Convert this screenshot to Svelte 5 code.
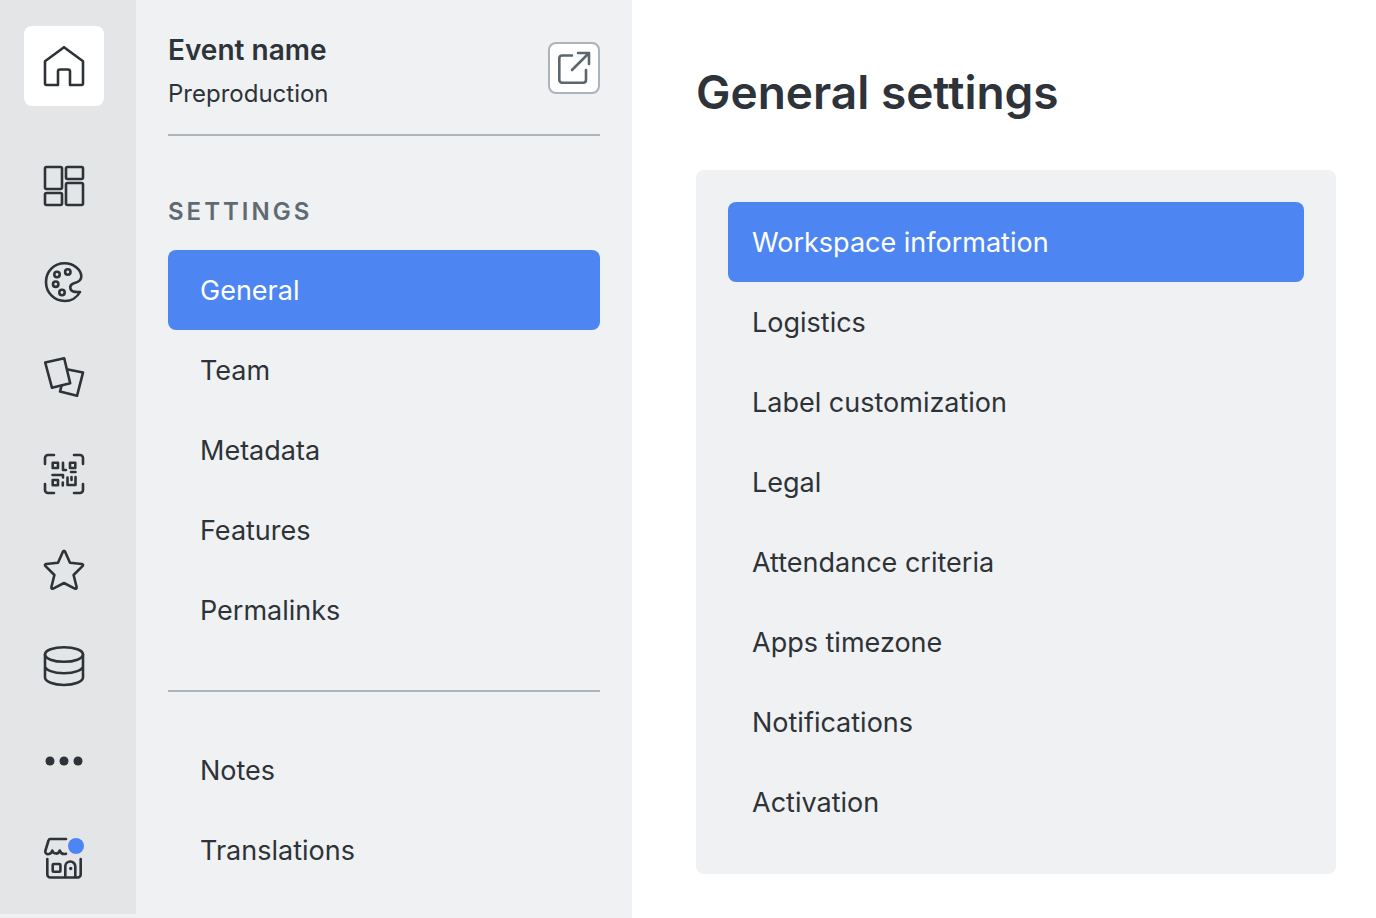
<script lang="ts">
  type MenuItem = { id: string; label: string };

  const railItems: MenuItem[] = [
    { id: "home", label: "Home" },
    { id: "layout", label: "Layout" },
    { id: "branding", label: "Branding" },
    { id: "cards", label: "Cards" },
    { id: "scan", label: "Scan" },
    { id: "favorites", label: "Favorites" },
    { id: "data", label: "Data" },
    { id: "more", label: "More" },
    { id: "store", label: "Store" },
  ];

  const settings: MenuItem[] = [
    { id: "general", label: "General" },
    { id: "team", label: "Team" },
    { id: "metadata", label: "Metadata" },
    { id: "features", label: "Features" },
    { id: "permalinks", label: "Permalinks" },
  ];

  const extras: MenuItem[] = [
    { id: "notes", label: "Notes" },
    { id: "translations", label: "Translations" },
  ];

  const sections: MenuItem[] = [
    { id: "workspace", label: "Workspace information" },
    { id: "logistics", label: "Logistics" },
    { id: "labels", label: "Label customization" },
    { id: "legal", label: "Legal" },
    { id: "attendance", label: "Attendance criteria" },
    { id: "timezone", label: "Apps timezone" },
    { id: "notifications", label: "Notifications" },
    { id: "activation", label: "Activation" },
  ];

  let rail = $state("home");
  let page = $state("general");
  let section = $state("workspace");
</script>

{#snippet icon(id: string)}
  <svg class="icon" viewBox="0 0 60 60" aria-hidden="true">
    {#if id === "home"}
      <path d="M11 25.2 30 11.2l19 14v22.3a1.5 1.5 0 0 1-1.5 1.5H36V35.5a2 2 0 0 0-2-2h-8a2 2 0 0 0-2 2V49H12.5a1.5 1.5 0 0 1-1.5-1.500z" />
    {:else if id === "layout"}
      <rect x="11" y="11" width="17" height="22" rx="1.5" />
      <rect x="32" y="11" width="17" height="12" rx="1.5" />
      <rect x="11" y="37" width="17" height="12" rx="1.5" />
      <rect x="32" y="27" width="17" height="22" rx="1.5" />
    {:else if id === "branding"}
      <path d="M46 40C43 45.5 37 49 31 49 20 49 12 40.5 12 30s8-18.700 18.500-18.700c9.500 0 16.800 6.700 16.800 13.200 0 4.500-3.300 5.700-6.800 6.500-3.500 1-4.800 3-4 6 1 3 4.500 3.300 9.500 3z" />
      <circle cx="23" cy="22.5" r="2.700" />
      <circle cx="33.8" cy="20" r="2.700" />
      <circle cx="21.7" cy="32.2" r="2.700" />
      <circle cx="28" cy="40.5" r="2.700" />
    {:else if id === "cards"}
      <path d="m11.200 14.500 19-4.200 6 25L18 39.800z" />
      <path d="m34 21.600 15 3-6 23.200-17-4.300 1.500-5.500" />
    {:else if id === "scan"}
      <path d="M11 20v-6a3 3 0 0 1 3-3h6M40 11h6a3 3 0 0 1 3 3v6M49 40v6a3 3 0 0 1-3 3h-6M20 49h-6a3 3 0 0 1-3-3v-6" />
      <rect x="18.700" y="18.700" width="5.300" height="5.300" />
      <rect x="36" y="18.700" width="5.300" height="5.300" />
      <rect x="18.700" y="36" width="5.300" height="5.300" />
      <path d="M29 18.700v7.300h3M37 28h4.500M18.500 31H29v2.500M28.800 38.500v3M33.500 33.500v7.500h8v-8M37.500 33v3" />
    {:else if id === "favorites"}
      <path d="M28.900 11.800q1.100-1.800 2.200 0l4.900 11 11.900 1.200q2 .5.600 2.200L39.600 35l3 12q.2 2.300-1.800 1.600L30 43l-10.800 5.600q-2 .7-1.800-1.600l3-12-8.900-8.800q-1.400-1.700.6-2.200L24 22.800z" />
    {:else if id === "data"}
      <ellipse cx="30" cy="18.500" rx="19" ry="7.300" />
      <path d="M11 18.500v23C11 45.500 19.500 49 30 49s19-3.500 19-7.500v-23M11 30c0 4 8.500 7.300 19 7.300S49 34 49 30" />
    {:else if id === "more"}
      <g class="solid">
        <circle cx="16" cy="29" r="4.500" />
        <circle cx="30" cy="29" r="4.500" />
        <circle cx="44" cy="29" r="4.500" />
      </g>
    {:else if id === "store"}
      <path d="M32 11H16.500a2 2 0 0 0-2 1.500L11.300 23c-.5 4.200 5.700 4.500 7-.5 1.200 4 6 4.200 7.400 0 1 3 3.500 4 6.300 3.300" />
      <path d="M13.300 31v15.500a3 3 0 0 0 3 3h27.400a3 3 0 0 0 3-3V31" />
      <rect x="18.700" y="36" width="7.700" height="7.700" rx="1" />
      <path d="M31.300 49V38.500a5 5 0 0 1 10 0V49" />
      <circle class="solid" cx="36.700" cy="40.500" r="1.700" />
      <circle class="notice" cx="42" cy="18" r="8" />
    {/if}
  </svg>
{/snippet}

{#snippet menuItem(item: MenuItem, active: boolean, select: () => void)}
  <li>
    <button class="item" class:active onclick={select}>{item.label}</button>
  </li>
{/snippet}

<div class="app">
  <nav class="rail" aria-label="Main">
    {#each railItems as item (item.id)}
      <button
        class="tile"
        class:active={rail === item.id}
        aria-label={item.label}
        onclick={() => (rail = item.id)}
      >
        {@render icon(item.id)}
      </button>
    {/each}
  </nav>

  <aside class="panel">
    <header>
      <div>
        <h2>Event name</h2>
        <p>Preproduction</p>
      </div>
      <button class="open" aria-label="Open event">
        <svg viewBox="2 2 48 48" aria-hidden="true">
          <path d="M24 13.500H14a2.700 2.700 0 0 0-2.700 2.700V38a2.700 2.700 0 0 0 2.700 2.700h21.300A2.700 2.700 0 0 0 38 38V28M24 28l17-17M30 11h11v11" />
        </svg>
      </button>
    </header>

    <h3>SETTINGS</h3>
    <ul>
      {#each settings as item (item.id)}
        {@render menuItem(item, page === item.id, () => (page = item.id))}
      {/each}
    </ul>
    <hr />
    <ul>
      {#each extras as item (item.id)}
        {@render menuItem(item, page === item.id, () => (page = item.id))}
      {/each}
    </ul>
  </aside>

  <main>
    <h1>General settings</h1>
    <ul class="card">
      {#each sections as item (item.id)}
        {@render menuItem(item, section === item.id, () => (section = item.id))}
      {/each}
    </ul>
  </main>
</div>

<style>
  .app {
    display: flex;
    min-height: 100vh;
    background: #f0f1f3;
    color: #2d3338;
    font-family: Inter, "Liberation Sans", sans-serif;
    font-size: 27px;
  }
  h1,
  h2,
  h3,
  p,
  ul {
    margin: 0;
    padding: 0;
  }
  ul {
    list-style: none;
  }
  button {
    border: 0;
    padding: 0;
    background: none;
    color: inherit;
    font: inherit;
    cursor: pointer;
  }

  .rail {
    display: flex;
    flex: none;
    flex-direction: column;
    align-self: flex-start;
    gap: 16px;
    padding: 26px 32px 16px 24px;
    background: #e4e5e7;
  }
  .tile {
    display: grid;
    place-items: center;
    width: 80px;
    height: 80px;
    border-radius: 8px;
  }
  .tile:first-child {
    margin-bottom: 24px;
  }
  .tile.active {
    background: #fff;
  }
  .icon {
    width: 60px;
    height: 60px;
    fill: none;
    stroke: #2d3338;
    stroke-width: 2.6;
    stroke-linecap: round;
    stroke-linejoin: round;
  }
  .solid {
    fill: #2d3338;
    stroke: none;
  }
  .notice {
    fill: #4d86f3;
    stroke: none;
  }

  .panel {
    flex: none;
    box-sizing: border-box;
    width: 496px;
    padding: 32px 32px 28px;
  }
  header {
    display: flex;
    align-items: flex-start;
    justify-content: space-between;
    padding-bottom: 22px;
    border-bottom: 2px solid #abb3bb;
  }
  h2 {
    font-size: 28px;
    font-weight: 600;
    line-height: 36px;
  }
  p {
    padding-top: 8px;
    font-size: 24px;
    line-height: 36px;
  }
  .open {
    box-sizing: border-box;
    width: 52px;
    height: 52px;
    margin-top: 10px;
    border: 2px solid #abb3bb;
    border-radius: 8px;
    background: #fff;
  }
  .open svg {
    display: block;
    fill: none;
    stroke: #5b666e;
    stroke-width: 2.6;
    stroke-linecap: round;
    stroke-linejoin: round;
  }
  h3 {
    padding: 60px 0 22px;
    color: #5f6a72;
    font-size: 24px;
    font-weight: 600;
    line-height: 32px;
    letter-spacing: 3px;
  }
  .item {
    display: block;
    width: 100%;
    height: 80px;
    padding: 0 32px;
    border-radius: 8px;
    text-align: left;
  }
  .item.active {
    background: #4d86f3;
    color: #fff;
  }
  hr {
    height: 2px;
    margin: 40px 0 38px;
    border: 0;
    background: #abb3bb;
  }

  main {
    flex: 1;
    min-width: 0;
    padding: 60px 40px 44px 64px;
    background: #fff;
  }
  h1 {
    margin-bottom: 46px;
    font-size: 46px;
    font-weight: 600;
    line-height: 64px;
  }
  .card {
    padding: 32px;
    border-radius: 8px;
    background: #f0f1f3;
  }
  .card .item {
    padding: 0 24px;
  }
</style>
